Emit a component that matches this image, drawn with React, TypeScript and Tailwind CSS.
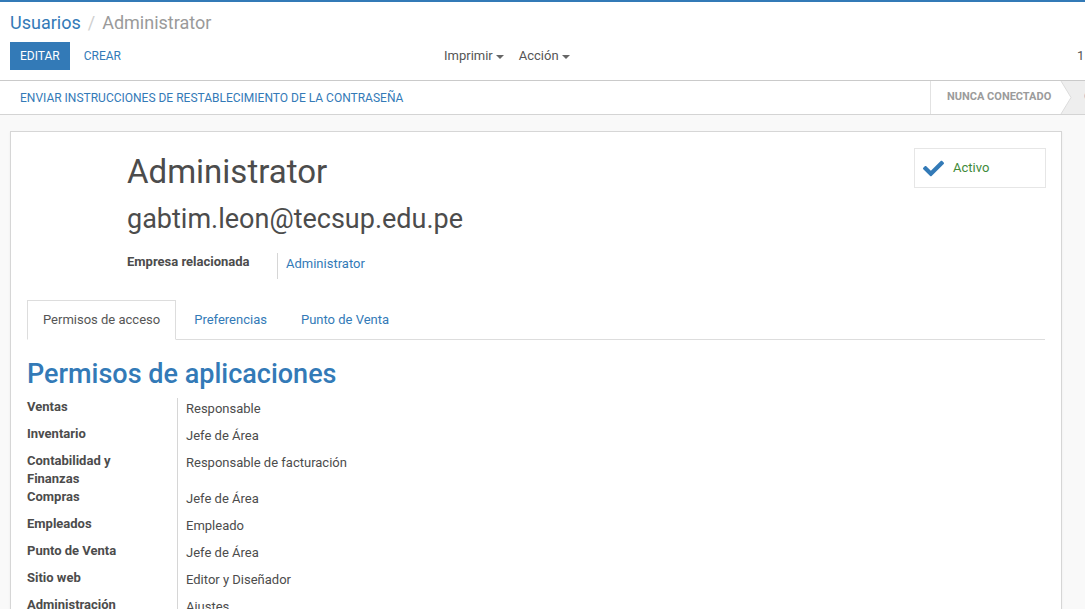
import { FaCheck } from 'react-icons/fa'

const permisos: { label: string; value: string }[] = [
  { label: 'Ventas', value: 'Responsable' },
  { label: 'Inventario', value: 'Jefe de Área' },
  { label: 'Contabilidad y Finanzas', value: 'Responsable de facturación' },
  { label: 'Compras', value: 'Jefe de Área' },
  { label: 'Empleados', value: 'Empleado' },
  { label: 'Punto de Venta', value: 'Jefe de Área' },
  { label: 'Sitio web', value: 'Editor y Diseñador' },
  { label: 'Administración', value: 'Ajustes' },
]

const Caret = () => (
  <span className="inline-block ml-[3px] w-0 h-0 border-x-[4px] border-x-transparent border-t-[4px] border-t-[#666] align-middle" />
)

export default function App() {
  return (
    <div className="w-[1085px] h-[609px] overflow-hidden bg-[#f9f9f9] text-[13px] text-[#4c4c4c] font-['Roboto','Liberation_Sans',sans-serif]">
      <div className="h-[2px] bg-[#337ab7]" />

      {/* control panel */}
      <div className="bg-white border-b border-[#cacaca] pt-[8px] pb-[10px]">
        <div className="h-[26px] leading-[26px] text-[18px] pl-[10px] whitespace-nowrap">
          <span className="text-[#337ab7]">Usuarios</span>
          <span className="text-[#cfcfcf] px-[7px]">/</span>
          <span className="text-[#9a9a9a]">Administrator</span>
        </div>
        <div className="mt-[6px] flex items-center h-[28px] whitespace-nowrap">
          <div className="shrink-0 flex items-center w-[434px] pl-[10px]">
            <button className="h-[28px] px-[10px] bg-[#337ab7] text-white text-[12px] uppercase">Editar</button>
            <button className="ml-[4px] h-[28px] px-[10px] text-[#337ab7] text-[12px] uppercase">Crear</button>
          </div>
          <div className="shrink-0 flex items-center w-[643px] pl-[10px] text-[13px] text-[#555]">
            <span>Imprimir<Caret /></span>
            <span className="ml-[15px]">Acción<Caret /></span>
          </div>
          <span className="shrink-0 text-[13px] text-[#555]">1 / 1</span>
        </div>
      </div>

      {/* statusbar */}
      <div className="bg-white border-b border-[#d4d4d4] h-[34px] flex items-stretch whitespace-nowrap">
        <div className="shrink-0 w-[930px] flex items-center pl-[20px] text-[12px] text-[#337ab7] uppercase">
          Enviar instrucciones de restablecimiento de la contraseña
        </div>
        <div className="shrink-0 flex items-center border-l border-[#e2e2e2] pl-[16px] pr-[9px] text-[11px] font-bold text-[#9b9b9b] uppercase">
          Nunca conectado
        </div>
        <div className="shrink-0 flex items-stretch bg-[#eeeeee] text-[11px] font-bold text-[#337ab7] uppercase">
          <svg width="12" height="33" viewBox="0 0 12 33" className="block">
            <polygon points="0,0 1,0 11,16.5 1,33 0,33" fill="#ffffff" />
            <polyline points="1,0 11,16.5 1,33" fill="none" stroke="#dcdcdc" strokeWidth="1" />
          </svg>
          <span className="flex items-center pl-[12px] pr-[16px]">Confirmado</span>
        </div>
      </div>

      {/* sheet */}
      <div className="mt-[16px] ml-[10px] w-[1052px] bg-white border border-[#d6d6d6] shadow-[0_1px_2px_rgba(0,0,0,0.06)] pl-[16px] pr-[15px] pt-[16px] pb-[20px]">
        <div className="flex items-start">
          <div className="flex-1 pl-[100px]">
            <h1 className="mt-[4px] text-[33px] leading-[40px] text-[#4c4c4c]">Administrator</h1>
            <div className="mt-[10px] text-[27px] leading-[34px] text-[#4c4c4c]">gabtim.leon@tecsup.edu.pe</div>
            <div className="mt-[17px] flex items-start">
              <div className="w-[151px] h-[26px] border-r border-[#d6d6d6] font-bold leading-[18px]">Empresa relacionada</div>
              <div className="pl-[8px] pt-[2px] leading-[18px] text-[#337ab7]">Administrator</div>
            </div>
          </div>
          <div className="w-[132px] h-[40px] border border-[#e6e6e6] flex items-center pl-[8px]">
            <FaCheck className="text-[#337ab7]" size={21} />
            <span className="ml-[9px] text-[#3f8a3a]">Activo</span>
          </div>
        </div>

        {/* tabs */}
        <div className="mt-[21px] mr-[1px] flex items-end h-[40px] border-b border-[#dddddd]">
          <div className="h-[40px] -mb-px px-[15px] flex items-center bg-white border border-[#dddddd] border-b-white text-[#555]">
            Permisos de acceso
          </div>
          <div className="ml-[2px] h-[39px] px-[16px] flex items-center text-[#337ab7]">Preferencias</div>
          <div className="ml-[2px] h-[39px] px-[16px] flex items-center text-[#337ab7]">Punto de Venta</div>
        </div>

        <h2 className="mt-[17px] text-[27px] leading-[34px] font-medium text-[#337ab7]">Permisos de aplicaciones</h2>

        <div className="mt-[7px]">
          {permisos.map((p) => (
            <div key={p.label} className="flex items-stretch">
              <div className="w-[151px] pr-[30px] border-r border-[#d6d6d6] font-bold leading-[18px]">{p.label}</div>
              <div className="min-h-[27px] pl-[8px] pt-[2px] leading-[18px]">{p.value}</div>
            </div>
          ))}
        </div>
      </div>
    </div>
  )
}
